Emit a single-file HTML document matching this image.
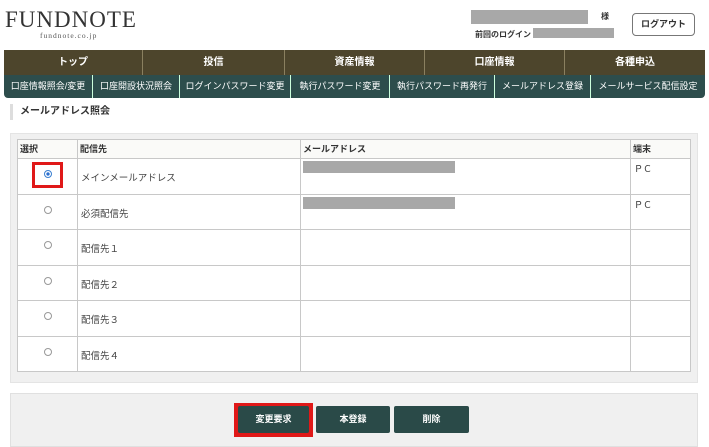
<!DOCTYPE html>
<html><head><meta charset="utf-8"><style>
*{box-sizing:border-box;margin:0;padding:0}
body{width:709px;height:447px;background:#fff;font-family:"Liberation Sans","Noto Sans CJK JP",sans-serif;position:relative;overflow:hidden;color:#333}
.a{position:absolute}
.nav{left:4px;top:50px;width:701px;height:25px;background:#4d452c;display:flex}
.nav div{color:#fff;font-weight:bold;font-size:10px;text-align:center;line-height:25px;border-right:1px solid #8a8060}
.nav div:last-child{border:none}
.sub{left:4px;top:75px;width:701px;height:23px;background:#2d4d4c;border-radius:0 0 4px 4px;display:flex;font-size:9px;color:#fff;line-height:23px}
.sub div{text-align:center;border-right:1px solid #cfd;white-space:nowrap;overflow:hidden}
.sub div:last-child{border:none}
table{position:absolute;left:17px;top:139px;width:674px;border-collapse:collapse;background:#fff;font-size:9.5px}
td,th{border:1px solid #c8c8c8;vertical-align:top;text-align:left}
th{height:19px;font-weight:bold;padding:2px 2px;font-size:9px;background:#fafaf8}
td{height:35.5px}
.r{width:8px;height:8px;border:1px solid #999;border-radius:50%;margin:11px auto 0}
.lbl{padding-top:11px;padding-left:3px;color:#444}
.g{width:152px;height:12px;background:#a8a8a8;margin-top:2px;margin-left:2px}
.btn{position:absolute;top:406px;height:27px;background:#2a4a48;color:#fff;font-size:9px;font-weight:bold;text-align:center;line-height:27px;border-radius:2px}
</style></head><body>
<div class="a" style="left:5px;top:7px;font-family:'Liberation Serif',serif;font-size:23px;letter-spacing:1px;color:#333">FUNDNOTE</div>
<div class="a" style="left:40px;top:31px;font-family:'Liberation Serif',serif;font-size:7.5px;color:#555;letter-spacing:1px">fundnote.co.jp</div>
<div class="a" style="left:471px;top:10px;width:117px;height:14px;background:#a8a8a8"></div>
<div class="a" style="left:601px;top:11px;font-size:8px;font-weight:bold">様</div>
<div class="a" style="left:475px;top:29px;font-size:8px;font-weight:bold">前回のログイン</div>
<div class="a" style="left:533px;top:28px;width:81px;height:10px;background:#a8a8a8"></div>
<div class="a" style="left:632px;top:13px;width:63px;height:23px;border:1px solid #777;border-radius:4px;font-size:9px;font-weight:bold;text-align:center;line-height:21px">ログアウト</div>
<div class="a nav"><div style="width:139px">トップ</div><div style="width:142px">投信</div><div style="width:140px">資産情報</div><div style="width:140px">口座情報</div><div style="flex:1">各種申込</div></div>
<div class="a sub"><div style="width:89px">口座情報照会/変更</div><div style="width:87px">口座開設状況照会</div><div style="width:111px">ログインパスワード変更</div><div style="width:99px">執行パスワード変更</div><div style="width:105px">執行パスワード再発行</div><div style="width:96px">メールアドレス登録</div><div style="flex:1">メールサービス配信設定</div></div>
<div class="a" style="left:10px;top:104px;height:16px;border-left:3px solid #ddd;padding-left:7px;font-size:10px;font-weight:bold;line-height:16px">メールアドレス照会</div>
<div class="a" style="left:10px;top:133px;width:688px;height:250px;background:#f0f0f0;border:1px solid #e4e4e4"></div>
<table>
<tr><th style="width:60px">選択</th><th style="width:223px">配信先</th><th style="width:330px">メールアドレス</th><th>端末</th></tr>
<tr><td><div class="r" style="border-color:#3a7fd0;background:radial-gradient(#2a6fd0 35%,#fff 45%)"></div></td><td class="lbl">メインメールアドレス</td><td><div class="g"></div></td><td style="padding:3px 3px;font-size:9px">ＰＣ</td></tr>
<tr><td><div class="r"></div></td><td class="lbl">必須配信先</td><td><div class="g"></div></td><td style="padding:3px 3px;font-size:9px">ＰＣ</td></tr>
<tr><td><div class="r"></div></td><td class="lbl">配信先１</td><td></td><td></td></tr>
<tr><td><div class="r"></div></td><td class="lbl">配信先２</td><td></td><td></td></tr>
<tr><td><div class="r"></div></td><td class="lbl">配信先３</td><td></td><td></td></tr>
<tr><td><div class="r"></div></td><td class="lbl">配信先４</td><td></td><td></td></tr>
</table>
<div class="a" style="left:32px;top:162px;width:31px;height:26px;border:3px solid #e01818"></div>
<div class="a" style="left:10px;top:393px;width:688px;height:54px;background:#f0f0f0;border:1px solid #e0e0e0"></div>
<div class="a" style="left:234px;top:403px;width:79px;height:34px;background:#e01818"></div>
<div class="btn" style="left:238px;width:71px">変更要求</div>
<div class="btn" style="left:316px;width:74px">本登録</div>
<div class="btn" style="left:394px;width:75px">削除</div>
</body></html>
